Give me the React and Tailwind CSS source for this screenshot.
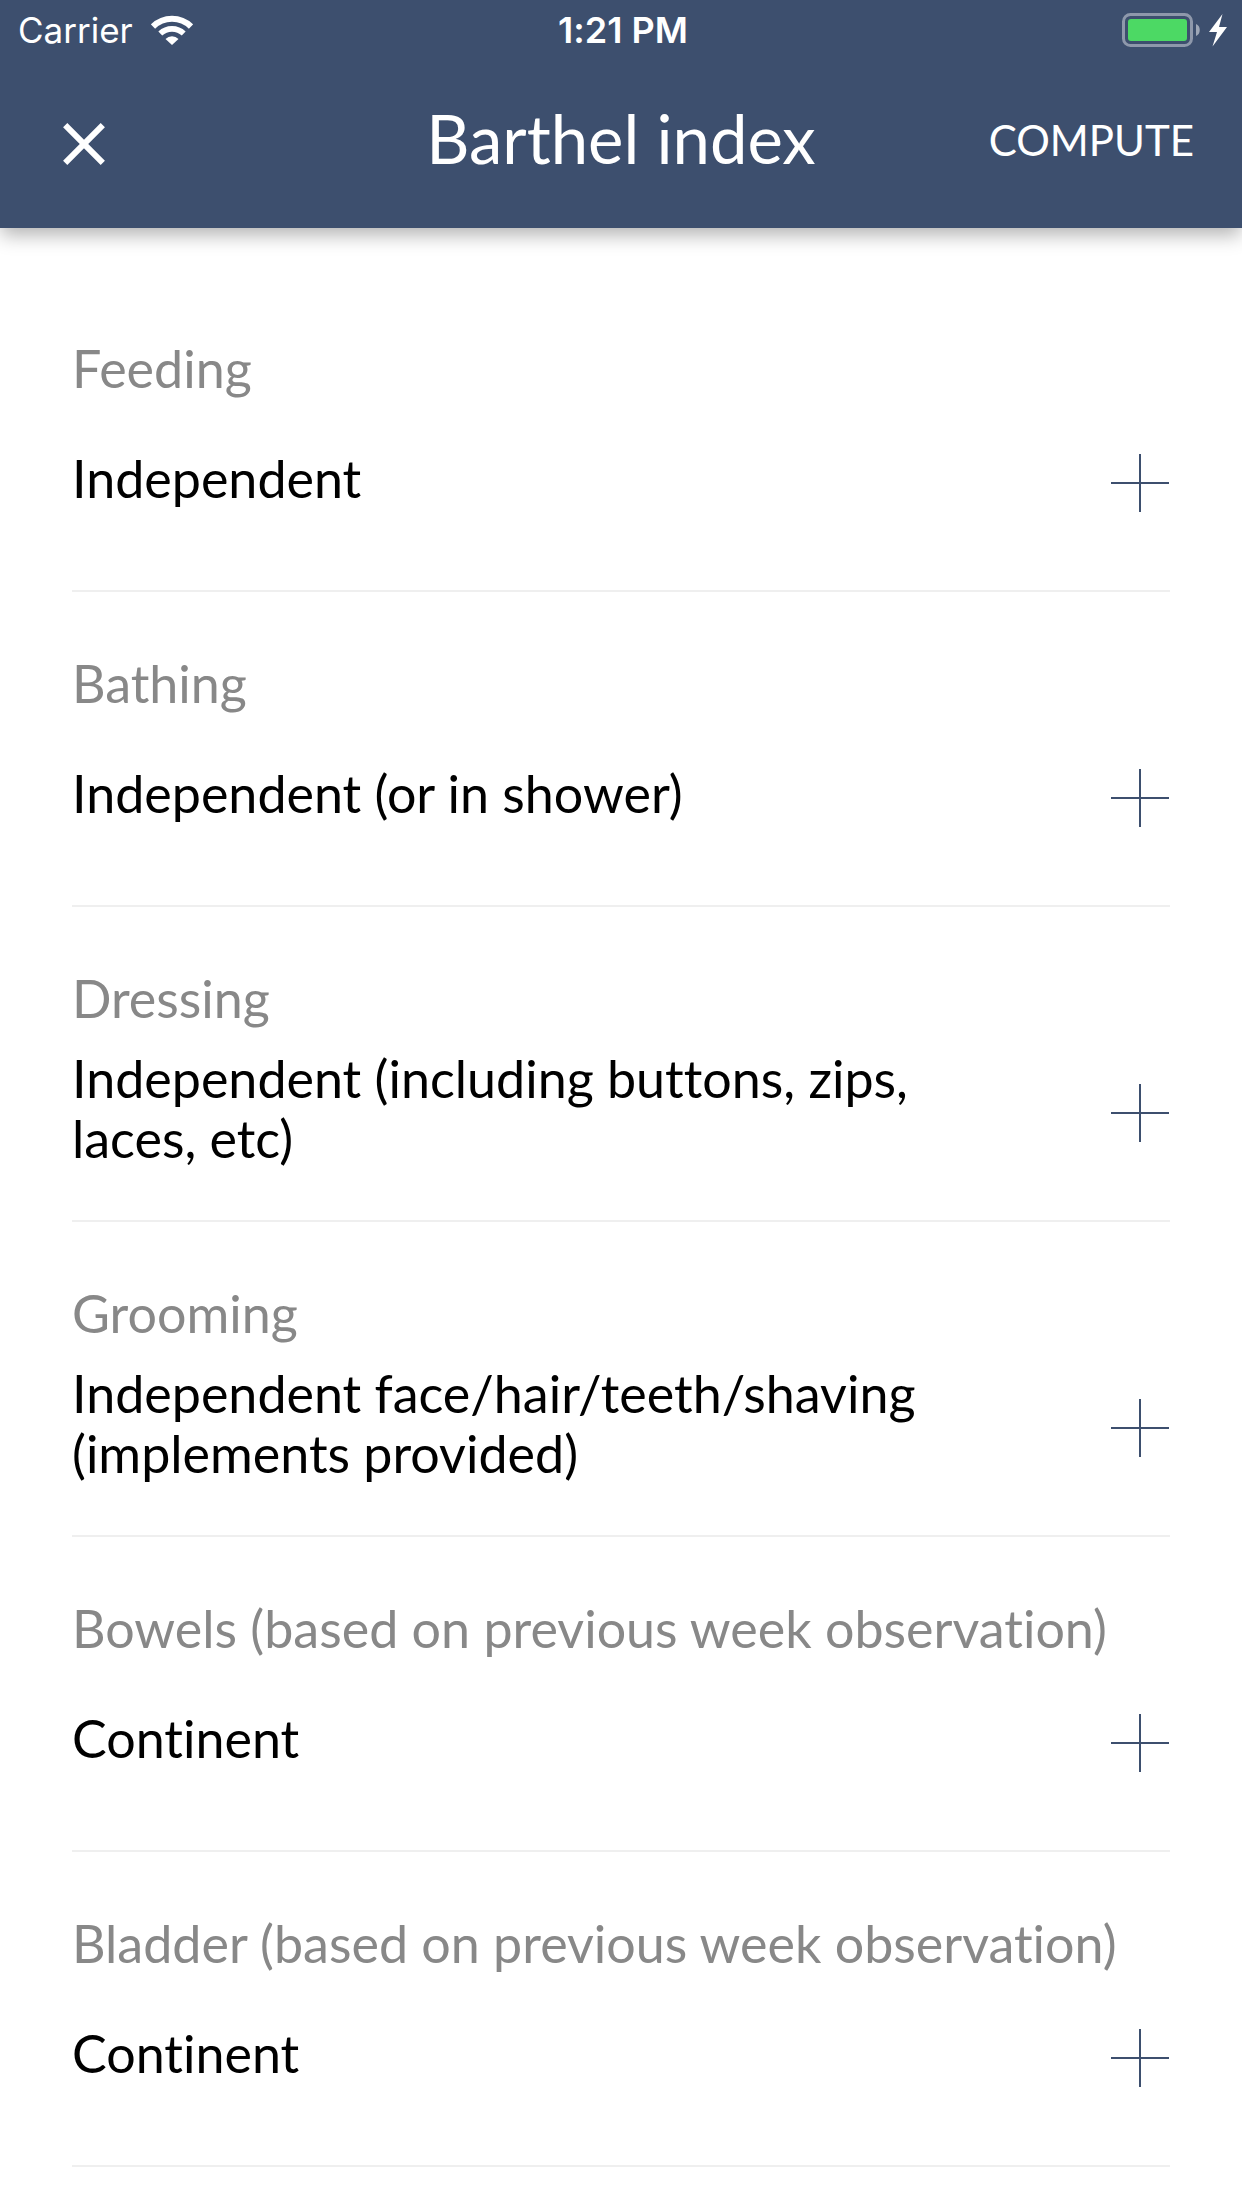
import { useState } from "react";

const QUESTIONS = [
  { title: "Feeding", answer: "Independent" },
  { title: "Bathing", answer: "Independent (or in shower)" },
  { title: "Dressing", answer: "Independent (including buttons, zips, laces, etc)" },
  { title: "Grooming", answer: "Independent face/hair/teeth/shaving (implements provided)" },
  { title: "Bowels (based on previous week observation)", answer: "Continent" },
  { title: "Bladder (based on previous week observation)", answer: "Continent" },
];

function WifiIcon() {
  return (
    <svg className="w-[42px] h-[30px]" viewBox="0 0 42 30" fill="none" aria-hidden="true">
      <path d="M2 11.5a27 27 0 0 1 38 0" stroke="currentColor" strokeWidth="6" />
      <path d="M9.3 18.6a16.8 16.8 0 0 1 23.4 0" stroke="currentColor" strokeWidth="5.6" />
      <path d="M14.5 24a9.3 9.3 0 0 1 13 0L21 30z" fill="currentColor" />
    </svg>
  );
}

function BatteryIcon() {
  return (
    <svg className="w-[106px] h-[34px]" viewBox="0 0 106 34" fill="none" aria-hidden="true">
      <rect x="1.5" y="1.5" width="68" height="31" rx="7" stroke="#fff" strokeOpacity="0.42" strokeWidth="3" />
      <rect x="6" y="6" width="59" height="22" rx="3" fill="#4cd964" />
      <path d="M74 11c5 1.500 5 10.500 0 12z" fill="#fff" fillOpacity="0.5" />
      <path d="M100.500 1L87 19h8l-4.500 14.500L105 14h-8z" fill="#fff" />
    </svg>
  );
}

function StatusBar() {
  return (
    <div className="grid grid-cols-[1fr_auto_1fr] items-center h-[60px] pl-[18px] pr-[14px] text-[36px] leading-[60px] font-['Inter',sans-serif]">
      <div className="flex items-center gap-[18px]">
        <span className="text-[35px]">Carrier</span>
        <WifiIcon />
      </div>
      <span className="font-semibold">1:21 PM</span>
      <div className="flex justify-end">
        <BatteryIcon />
      </div>
    </div>
  );
}

function Header() {
  return (
    <header className="relative bg-[#3d4f6e] text-white pb-2 shadow-[0_8px_18px_-1px_rgba(0,0,0,0.3)]">
      <StatusBar />
      <div className="grid grid-cols-[1fr_auto_1fr] items-center h-40 px-12">
        <button type="button" aria-label="Close" className="justify-self-start pt-2 pl-[15px]">
          <svg className="w-[42px] h-[42px]" viewBox="0 0 42 42" fill="none" aria-hidden="true">
            <path d="M2.200 2.200l37.600 37.600M39.800 2.200L2.200 39.800" stroke="currentColor" strokeWidth="6" />
          </svg>
        </button>
        <h1 className="text-[67px] leading-[80px] pb-1">Barthel index</h1>
        <button type="button" className="justify-self-end text-[42px] leading-[60px]">
          COMPUTE
        </button>
      </div>
    </header>
  );
}

function Question({ title, answer, onOpen }) {
  return (
    <li className="border-b-2 border-[#efefef] pt-[61px] pb-[42px]">
      <h2 className="text-[52px] leading-[60px] text-[#888]">{title}</h2>
      <div className="flex items-center justify-between gap-36 mt-5 min-h-[130px]">
        <p className="flex-1 pb-[10px] text-[52px] leading-[60px] text-black">{answer}</p>
        <button type="button" aria-label={`Change ${title}`} onClick={onOpen} className="text-[#3d4f6e]">
          <svg className="w-[60px] h-[60px]" viewBox="0 0 60 60" fill="none" aria-hidden="true">
            <path d="M30 1v58M1 30h58" stroke="currentColor" strokeWidth="2" />
          </svg>
        </button>
      </div>
    </li>
  );
}

export default function App() {
  const [, setOpenQuestion] = useState(null);

  return (
    <div className="min-h-screen bg-white font-['Lato',sans-serif] [font-variant-ligatures:none]">
      <Header />
      <main className="px-[72px] pt-[49px]">
        <ul>
          {QUESTIONS.map((question, index) => (
            <Question
              key={question.title}
              title={question.title}
              answer={question.answer}
              onOpen={() => setOpenQuestion(index)}
            />
          ))}
        </ul>
      </main>
    </div>
  );
}
